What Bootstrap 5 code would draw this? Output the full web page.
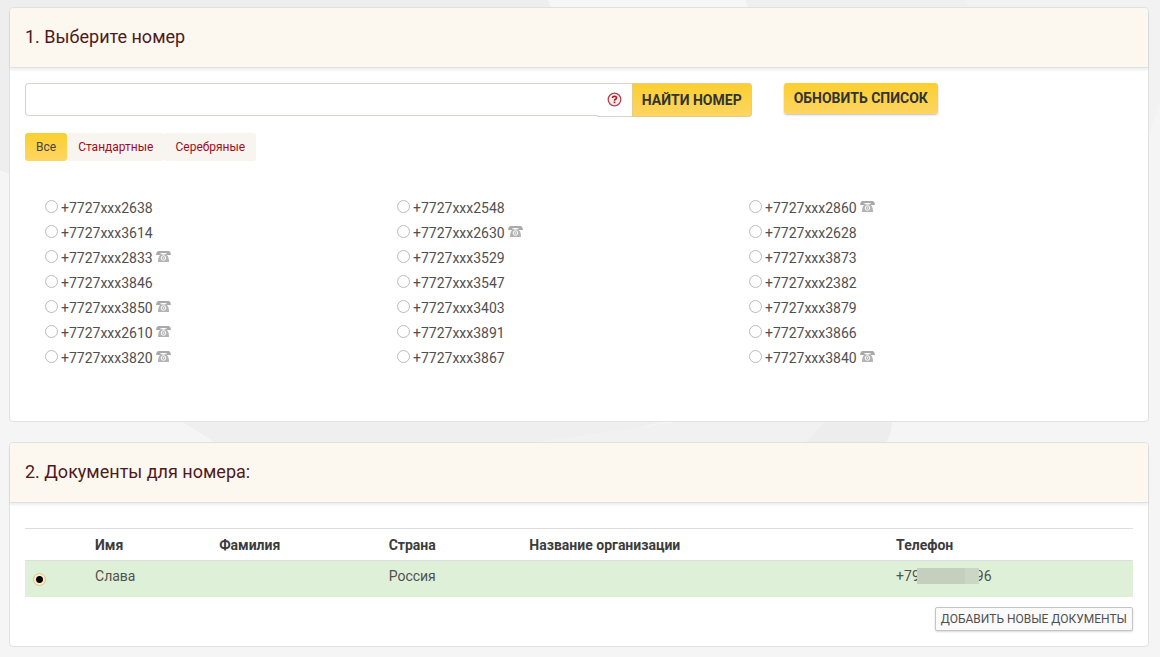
<!DOCTYPE html>
<html lang="ru">
<head>
<meta charset="utf-8">
<meta name="viewport" content="width=device-width, initial-scale=1">
<title>Выберите номер</title>
<link href="https://cdn.jsdelivr.net/npm/bootstrap@5.3.0/dist/css/bootstrap.min.css" rel="stylesheet">
<style>
body { background: #f5f5f5; color: #505050; font-family: Roboto, "Liberation Sans", sans-serif; font-size: 14px; line-height: 20px; }
.backdrop-art { position: fixed; inset: 0; width: 100%; height: 100%; z-index: -1; }
.page { padding: 7px 11px 10px 9px; gap: 20px; }
.panel { border-color: #e1e1e1; border-radius: 4px; }
.panel > .card-header { background: #fcf7ef; border-bottom: 1px solid #e1e1e1; padding: 19px 15px 20px; box-shadow: 0 2px 3px rgba(0,0,0,.07); }
.panel h2 { font-size: 18px; line-height: 20px; font-weight: 400; color: #4e1a20; margin: 0; }
.panel > .card-body { padding: 15px; }
.finder { --bs-gutter-x: 30px; }
.search { padding-right: 2px; }
.search .form-control { height: 33px; border-color: #dcd4cc; border-radius: 4px 0 0 4px; border-right: 0; font-size: 14px; }
.search .input-group-text { height: 34px; width: 36px; margin: 0; padding: 0 0 2px 10px; background: #fff; border-color: #dcd4cc; border-left: 0; border-right: 0; }
.btn-gold { --bs-btn-color: #333; --bs-btn-border-color: #fbd257; --bs-btn-hover-color: #222; --bs-btn-hover-bg: #fccf34; background: linear-gradient(#fbcf30, #fdd563); border: 0; padding: 0 10px; height: 31px; font-size: 14px; line-height: 31px; font-weight: 700; border-radius: 3px; box-shadow: 0 1px 2px rgba(0,0,0,.25); }
.search .btn-gold { height: 34px; border: 1px solid #e6cc8b; padding: 0 9px; box-shadow: none; }
.filters { --bs-nav-pills-border-radius: 3px; margin-top: 16px; }
.filters .nav-link { font-size: 12px; line-height: 18px; padding: 5px 11px; color: #a30b1c; background: #f8f4ef; }
.filters .nav-link.active { background: linear-gradient(#fbcf30, #fdd563); color: #444; }
.numbers { padding: 33px 32px 37px 20px; }
.numbers label { display: flex; align-items: flex-start; height: 25px; line-height: 28px; }
.pick { appearance: none; flex: none; width: 13px; height: 13px; margin: 6px 3px 0 0; border: 1px solid #bbb; border-radius: 50%; background: #fff; }
.pick:checked { border-color: #d9c493; background: radial-gradient(circle, #000 3px, #fdebc9 4px); }
.numbers svg { margin: 7px 0 0 3px; }
.docs { margin: 10px 0; table-layout: fixed; --bs-table-color: #505050; border-color: #ddd; }
.docs th { border-top: 1px solid #ddd; padding: 6px 8px 5px; font-weight: 700; color: #3c3c3c; }
.docs td { height: 36px; padding: 5px 8px; border: 0; }
.docs .table-success { --bs-table-bg: #dff0d9; --bs-table-color: #505050; }
.docs .pick { display: block; margin-top: 7px; }
.c-pick { width: 5.6%; } .c-name { width: 11.2%; } .c-last { width: 15.3%; } .c-land { width: 12.7%; } .c-org { width: 33.1%; }
.masked { display: inline-block; width: 62px; height: 16px; margin: 0 -3px; vertical-align: -3px; position: relative; background: linear-gradient(90deg, #c4cfbe 48px, #c9d7c4 48px); }
.btn-add { background: #fafafa; border: 1px solid #c4c4c4; border-radius: 2px; color: #505050; font-size: 12px; line-height: 16px; padding: 3px 5px; box-shadow: 0 1px 2px rgba(0,0,0,.15); }
</style>
</head>
<body>
<svg class="backdrop-art" viewBox="0 0 1160 657" preserveAspectRatio="none" aria-hidden="true">
  <path fill="#eee" d="M0 0H555L550 60 300 300 0 170Z"/>
  <path fill="#efefef" d="M555 0H1160V100L1148 140H750L742 0Z"/>
  <path fill="#f6f6f6" d="M548 0H745L760 40H560Z"/>
  <path fill="#f2f2f2" d="M965 0H1160V320H1100Z"/>
  <path fill="#f5f5f5" d="M1160 100L1148 140V330H1160Z"/>
  <path fill="#efefef" d="M170 414L235 455H536L690 414Z"/>
  <path fill="#f1f1f1" d="M536 442L690 420H826L806 442Z"/>
  <path fill="#ededed" d="M826 420L804 444H885Q893 432 892 420Z"/>
</svg>
<svg class="d-none" aria-hidden="true">
  <symbol id="phone" viewBox="0 0 15 11">
    <path fill="#aaa" d="M2 0H13Q15 1 15 4H11V2H4V4H0Q0 1 2 0Z"/>
    <path fill="#b3b3b3" d="M4 2.6H5.5V3.6H9.5V2.6H11V4.3Q13 6 13 11H2Q2 6 4 4.3Z"/>
    <circle cx="7.5" cy="7" r="2.3" fill="#b3b3b3" stroke="#fff"/>
    <circle cx="7.5" cy="7" r=".8" fill="#fff"/>
  </symbol>
</svg>
<main class="page d-flex flex-column">
  <section class="card panel">
    <div class="card-header"><h2>1. Выберите номер</h2></div>
    <div class="card-body">
      <div class="row finder">
        <div class="col-8">
          <form class="input-group search align-items-start flex-nowrap">
            <input type="text" class="form-control" aria-label="Номер">
            <span class="input-group-text"><svg width="15" height="15" viewBox="0 0 15 15" aria-hidden="true"><circle cx="7.5" cy="7.5" r="6.3" fill="#eee" stroke="#b3424a" stroke-width="1.3"/><path d="M5.5 6Q5.5 4.2 7.5 4.2T9.5 5.9Q9.5 6.9 7.6 7.9V8.7" fill="none" stroke="#b80f1e" stroke-width="1.6"/><path d="M6.7 9.6H8.4V11.2H6.7Z" fill="#b80f1e"/></svg></span>
            <button type="button" class="btn btn-gold">НАЙТИ НОМЕР</button>
          </form>
        </div>
        <div class="col-4"><button type="button" class="btn btn-gold">ОБНОВИТЬ СПИСОК</button></div>
      </div>
      <nav class="nav nav-pills filters">
        <a class="nav-link active" href="#">Все</a>
        <a class="nav-link" href="#">Стандартные</a>
        <a class="nav-link" href="#">Серебряные</a>
      </nav>
      <div class="numbers">
        <div class="row g-0">
          <div class="col-4">
            <label><input class="pick" type="radio" name="num">+7727xxx2638</label>
            <label><input class="pick" type="radio" name="num">+7727xxx3614</label>
            <label><input class="pick" type="radio" name="num">+7727xxx2833<svg width="15" height="11"><use href="#phone"/></svg></label>
            <label><input class="pick" type="radio" name="num">+7727xxx3846</label>
            <label><input class="pick" type="radio" name="num">+7727xxx3850<svg width="15" height="11"><use href="#phone"/></svg></label>
            <label><input class="pick" type="radio" name="num">+7727xxx2610<svg width="15" height="11"><use href="#phone"/></svg></label>
            <label><input class="pick" type="radio" name="num">+7727xxx3820<svg width="15" height="11"><use href="#phone"/></svg></label>
          </div>
          <div class="col-4">
            <label><input class="pick" type="radio" name="num">+7727xxx2548</label>
            <label><input class="pick" type="radio" name="num">+7727xxx2630<svg width="15" height="11"><use href="#phone"/></svg></label>
            <label><input class="pick" type="radio" name="num">+7727xxx3529</label>
            <label><input class="pick" type="radio" name="num">+7727xxx3547</label>
            <label><input class="pick" type="radio" name="num">+7727xxx3403</label>
            <label><input class="pick" type="radio" name="num">+7727xxx3891</label>
            <label><input class="pick" type="radio" name="num">+7727xxx3867</label>
          </div>
          <div class="col-4">
            <label><input class="pick" type="radio" name="num">+7727xxx2860<svg width="15" height="11"><use href="#phone"/></svg></label>
            <label><input class="pick" type="radio" name="num">+7727xxx2628</label>
            <label><input class="pick" type="radio" name="num">+7727xxx3873</label>
            <label><input class="pick" type="radio" name="num">+7727xxx2382</label>
            <label><input class="pick" type="radio" name="num">+7727xxx3879</label>
            <label><input class="pick" type="radio" name="num">+7727xxx3866</label>
            <label><input class="pick" type="radio" name="num">+7727xxx3840<svg width="15" height="11"><use href="#phone"/></svg></label>
          </div>
        </div>
      </div>
    </div>
  </section>
  <section class="card panel">
    <div class="card-header"><h2>2. Документы для номера:</h2></div>
    <div class="card-body">
      <table class="table docs">
        <thead><tr><th class="c-pick"></th><th class="c-name">Имя</th><th class="c-last">Фамилия</th><th class="c-land">Страна</th><th class="c-org">Название организации</th><th>Телефон</th></tr></thead>
        <tbody><tr class="table-success"><td><input class="pick" type="radio" name="doc" aria-label="Слава" checked></td><td>Слава</td><td></td><td>Россия</td><td></td><td>+79<span class="masked"></span>96</td></tr></tbody>
      </table>
      <div class="text-end"><button type="button" class="btn btn-add">ДОБАВИТЬ НОВЫЕ ДОКУМЕНТЫ</button></div>
    </div>
  </section>
</main>
<script src="https://cdn.jsdelivr.net/npm/bootstrap@5.3.0/dist/js/bootstrap.bundle.min.js"></script>
</body>
</html>
